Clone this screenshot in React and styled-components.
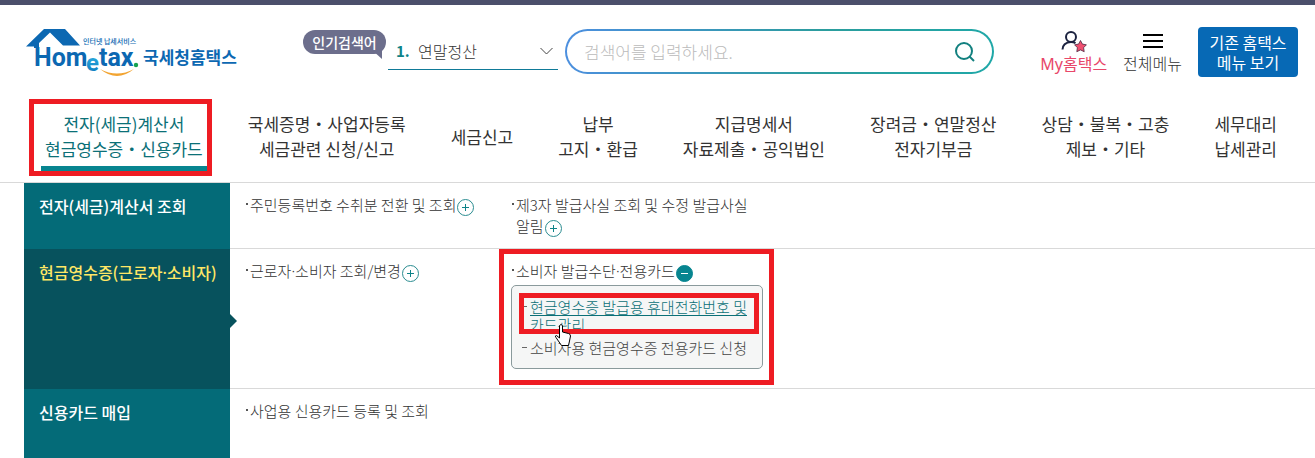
import React from 'react';
import styled, { createGlobalStyle, css } from 'styled-components';

const GlobalStyle = createGlobalStyle`
  *, *::before, *::after { box-sizing: border-box; }
  body {
    margin: 0;
    background: #fff;
    color: #333;
    font-family: "Noto Sans CJK KR", "Noto Sans", sans-serif;
    font-size: 15px;
    overflow: hidden;
  }
  ul { margin: 0; padding: 0; list-style: none; }
  a { color: inherit; text-decoration: none; }
  button, select, input { font: inherit; color: inherit; margin: 0; padding: 0; border: 0; background: none; }
`;

const Page = styled.div`
  border-top: 5px solid #4b4f6b;
`;

const Header = styled.header`
  display: flex;
  align-items: flex-start;
  padding: 22px 17px 0 25px;
  height: 90px;
`;

const Logo = styled.a`
  display: block;
  flex: none;
  width: 278px;
  svg { display: block; }
`;

const Keyword = styled.div`
  display: flex;
  flex: none;
  align-items: flex-start;
  gap: 2px;
  padding-top: 3px;
`;

const Pill = styled.span`
  position: relative;
  width: 83px;
  border-radius: 12px;
  background: #6c6e8c;
  color: #fff;
  font-size: 14px;
  font-weight: 500;
  line-height: 24px;
  text-align: center;
  &::after {
    content: "";
    position: absolute;
    right: 4px;
    bottom: -5px;
    border-top: 9px solid #6c6e8c;
    border-left: 10px solid transparent;
  }
`;

const KeywordBox = styled.label`
  display: flex;
  align-items: center;
  width: 170px;
  height: 40px;
  padding: 2px 5px 0 8px;
  border-bottom: 1px solid #0f7a98;
  font-size: 16px;
  b { width: 22px; color: #0e8388; font-size: 15px; }
  select { flex: 1; min-width: 0; appearance: none; outline: 0; font-weight: 300; }
`;

const Search = styled.form`
  display: flex;
  align-items: center;
  flex: 1;
  height: 45px;
  margin: 2px 46px 0 7px;
  padding: 0 16px 0 17px;
  border: 2px solid transparent;
  border-radius: 23px;
  background:
    linear-gradient(#fff, #fff) padding-box,
    linear-gradient(100deg, #4d8fe0, #2b9d9d 60%, #1fa8a8) border-box;
  input { flex: 1; min-width: 0; outline: 0; font-size: 17px; font-weight: 300; }
  input::placeholder { color: #bbb; opacity: 1; }
  svg { display: block; }
`;

const Tool = styled.a`
  display: flex;
  flex: none;
  flex-direction: column;
  align-items: center;
  margin-right: 16px;
  padding-top: 2px;
  color: ${(p) => (p.$accent ? '#e8476a' : '#333')};
  font-family: "Noto Sans", "Noto Sans CJK KR", sans-serif;
  font-size: 16px;
  font-weight: ${(p) => (p.$accent ? 400 : 300)};
  line-height: 20px;
`;

const OldSite = styled.button`
  flex: none;
  width: 100px;
  height: 50px;
  padding: 0 8px;
  border-radius: 4px;
  background: #0769b5;
  color: #fff;
  font-size: 16px;
  line-height: 20px;
`;

const MainNav = styled.nav`
  height: 88px;
  border-bottom: 1px solid #d9d9d9;
  padding: 16px 38px 0 45px;
  ul {
    display: flex;
    align-items: center;
    justify-content: space-between;
  }
`;

const NavItem = styled.li`
  position: relative;
  font-size: 17px;
  line-height: 25px;
  text-align: center;
  white-space: nowrap;
  a { display: block; }
  ${(p) => p.$active && css`
    color: #0b7077;
    &::after {
      content: "";
      position: absolute;
      left: -4px;
      right: -4px;
      bottom: -10px;
      height: 5px;
      background: #078590;
    }
  `}
`;

const Mark = styled.span`
  position: absolute;
  z-index: 2;
  inset: ${(p) => p.$inset};
  border: 5px solid #ee1c23;
  pointer-events: none;
`;

const MenuRow = styled.section`
  display: flex;
  margin-left: 24px;
  min-height: ${(p) => p.$height}px;
`;

const RowTitle = styled.h2`
  position: relative;
  flex: none;
  width: 206px;
  margin: 0;
  padding: 11px 0 0 15px;
  border-bottom: 1px solid ${(p) => (p.$active ? '#07525d' : '#046b78')};
  background: ${(p) => (p.$active ? '#07525d' : '#046b78')};
  color: ${(p) => (p.$active ? '#ffe765' : '#fff')};
  font-size: 16px;
  font-weight: 500;
  line-height: 24px;
  white-space: nowrap;
  ${(p) => p.$active && css`
    &::after {
      content: "";
      position: absolute;
      left: 100%;
      top: 50%;
      margin-top: -5px;
      border: 7px solid transparent;
      border-left-color: #07525d;
      border-right-width: 0;
    }
  `}
`;

const RowBody = styled.ul`
  display: flex;
  flex: 1;
  gap: 14px;
  padding: 11px 15px;
  border-bottom: ${(p) => (p.$last ? 0 : 1)}px solid #d9d9d9;
`;

const Entry = styled.li`
  position: relative;
  width: 252px;
  font-weight: 300;
  line-height: 21px;
`;

const EntryLine = styled.div`
  position: relative;
  padding-left: 5px;
  &::before {
    content: "";
    position: absolute;
    left: 1px;
    top: 9px;
    width: 2px;
    height: 2px;
    background: #555;
  }
`;

const Dot = styled.span`
  font-family: "Noto Sans", sans-serif;
`;

const Toggle = styled.button`
  display: inline-block;
  width: 17px;
  height: 17px;
  margin-left: 1px;
  vertical-align: -5px;
  svg { display: block; }
`;

const SubMenu = styled.ul`
  position: relative;
  display: flex;
  flex-direction: column;
  gap: 5px;
  margin: 3px 0 0;
  padding: 12px 0 11px 18px;
  border: 1px solid #8a9a9c;
  border-radius: 5px;
  background: #f5f6f6;
  line-height: 18px;
`;

const SubItem = styled.li`
  position: relative;
  color: ${(p) => (p.$active ? '#0b7077' : '#444')};
  a {
    text-decoration: ${(p) => (p.$active ? 'underline' : 'none')};
    text-decoration-thickness: 1px;
    text-underline-offset: 2px;
  }
  &::before {
    content: "";
    position: absolute;
    left: -8px;
    top: 8px;
    width: 5px;
    height: 1px;
    background: #666;
  }
`;

const Pointer = styled.svg`
  position: absolute;
  z-index: 3;
  left: 42px;
  top: 37px;
`;

function HometaxLogo() {
  return (
    <svg width="214" height="52" viewBox="0 0 214 52" role="img" aria-label="Hometax 국세청홈택스">
      <defs>
        <linearGradient id="e-fill" x1="0" y1="0" x2="0" y2="1">
          <stop offset="0" stopColor="#35bdea" />
          <stop offset="1" stopColor="#0872b8" />
        </linearGradient>
      </defs>
      <path d="M1 19.500 L19 2 H40 L55 18.500 H38 L25 5.500 L14 16 V21 H9 V19.500 Z" fill="#0c68b2" />
      <g fontFamily="Roboto, Liberation Sans, sans-serif" fontWeight="700" fontSize="25" fill="#0c68b2">
        <text x="9" y="39">Hom</text>
        <text x="61" y="44" fontSize="24" fill="url(#e-fill)">e</text>
        <text x="74" y="39">tax</text>
      </g>
      <circle cx="111" cy="38" r="2.200" fill="#16a34f" />
      <path d="M75 42 Q92 56 109 42 Q92 51 75 42Z" fill="#f2a431" />
      <g fontFamily="Noto Sans CJK KR, sans-serif" fill="#0c68b2">
        <text x="58" y="17" fontSize="7" fontWeight="500">인터넷 납세서비스</text>
        <text x="118" y="37" fontSize="17" fontWeight="700">국세청홈택스</text>
      </g>
    </svg>
  );
}

function ToggleButton({ open, label }) {
  return (
    <Toggle type="button" aria-label={label} aria-expanded={!!open}>
      <svg width="17" height="17" viewBox="0 0 17 17" fill="none">
        <circle cx="8.500" cy="8.500" r="8" fill={open ? '#078590' : '#fff'} stroke={open ? '#078590' : '#2a8c90'} />
        <path d={open ? 'M5 8.500h7' : 'M5 8.500h7M8.500 5v7'} stroke={open ? '#fff' : '#0e8388'} />
      </svg>
    </Toggle>
  );
}

const NAV = [
  ['전자(세금)계산서', '현금영수증・신용카드'],
  ['국세증명・사업자등록', '세금관련 신청/신고'],
  ['세금신고'],
  ['납부', '고지・환급'],
  ['지급명세서', '자료제출・공익법인'],
  ['장려금・연말정산', '전자기부금'],
  ['상담・불복・고충', '제보・기타'],
  ['세무대리', '납세관리'],
];

function DottedText({ text }) {
  const parts = text.split('·');
  return parts.map((part, i) => (
    <React.Fragment key={part}>
      {i > 0 && <Dot>·</Dot>}
      {part}
    </React.Fragment>
  ));
}

function MenuEntry({ text, expandable, open, children }) {
  return (
    <Entry>
      <EntryLine>
        <a href="#menu"><DottedText text={text} /></a>
        {expandable && <ToggleButton open={open} label={open ? '접기' : '펼치기'} />}
      </EntryLine>
      {children}
    </Entry>
  );
}

export default function App() {
  return (
    <Page>
      <GlobalStyle />
      <Header>
        <Logo href="#home"><HometaxLogo /></Logo>
        <Keyword>
          <Pill>인기검색어</Pill>
          <KeywordBox>
            <b>1.</b>
            <select aria-label="인기검색어"><option>연말정산</option></select>
            <svg width="13" height="8" viewBox="0 0 13 8" fill="none" stroke="#444">
              <path d="M.500 1l6 6 6-6" />
            </svg>
          </KeywordBox>
        </Keyword>
        <Search onSubmit={(e) => e.preventDefault()}>
          <input type="text" aria-label="검색어" placeholder="검색어를 입력하세요." />
          <button type="submit" aria-label="검색">
            <svg width="22" height="22" viewBox="0 0 22 22" fill="none" stroke="#12807f" strokeWidth="2">
              <circle cx="10" cy="10" r="8" />
              <path d="M15.500 15.500l4.500 4.500" />
            </svg>
          </button>
        </Search>
        <Tool href="#my" $accent>
          <svg width="26" height="25" viewBox="0 0 26 25" fill="none">
            <circle cx="10" cy="8" r="5" stroke="#1c2340" strokeWidth="2" />
            <path d="M1.500 20.500c0-4 3-7.500 8.500-7.500 2 0 3.500.5 4.500 1.200" stroke="#1c2340" strokeWidth="2" />
            <path d="M19.500 11.500l1.900 3.600 4 .7-2.800 2.900.6 4-3.700-1.800-3.700 1.800.6-4-2.800-2.900 4-.7z" fill="#f05070" stroke="#4a2a44" strokeWidth=".8" />
          </svg>
          My홈택스
        </Tool>
        <Tool href="#all">
          <svg width="20" height="25" viewBox="0 0 20 25" stroke="#000" strokeWidth="2">
            <path d="M0 6h20M0 12h20M0 18h20" />
          </svg>
          전체메뉴
        </Tool>
        <OldSite type="button">기존 홈택스 메뉴 보기</OldSite>
      </Header>

      <MainNav>
        <ul>
          {NAV.map((lines, i) => (
            <NavItem key={lines[0]} $active={i === 0}>
              <a href="#nav">
                {lines[0]}
                {lines[1] && <><br />{lines[1]}</>}
              </a>
              {i === 0 && <Mark $inset="-12px -9px -15px -16px" />}
            </NavItem>
          ))}
        </ul>
      </MainNav>

      <main>
        <MenuRow $height={66}>
          <RowTitle>전자(세금)계산서 조회</RowTitle>
          <RowBody>
            <MenuEntry text="주민등록번호 수취분 전환 및 조회" expandable />
            <MenuEntry text="제3자 발급사실 조회 및 수정 발급사실 알림" expandable />
          </RowBody>
        </MenuRow>
        <MenuRow $height={140}>
          <RowTitle $active><DottedText text="현금영수증(근로자·소비자)" /></RowTitle>
          <RowBody>
            <MenuEntry text="근로자·소비자 조회/변경" expandable />
            <MenuEntry text="소비자 발급수단·전용카드" expandable open>
              <SubMenu>
                <SubItem $active><a href="#phone">현금영수증 발급용 휴대전화번호 및 카드관리</a></SubItem>
                <SubItem><a href="#card">소비자용 현금영수증 전용카드 신청</a></SubItem>
                <Mark $inset="7px 3px 34px 7px" />
                <Pointer width="18" height="24" viewBox="0 0 18 24" fill="#fff" stroke="#000">
                  <path d="M5.500 15V2.500q1.500-2 3 0V9l6 1.500q2 .5 2 2.500l-1 5-1 4.500h-7L2 14.500q-1.500-2 .5-2z" />
                </Pointer>
              </SubMenu>
              <Mark $inset="-11px -11px -8px -12px" />
            </MenuEntry>
          </RowBody>
        </MenuRow>
        <MenuRow $height={69}>
          <RowTitle>신용카드 매입</RowTitle>
          <RowBody $last>
            <MenuEntry text="사업용 신용카드 등록 및 조회" />
          </RowBody>
        </MenuRow>
      </main>
    </Page>
  );
}
